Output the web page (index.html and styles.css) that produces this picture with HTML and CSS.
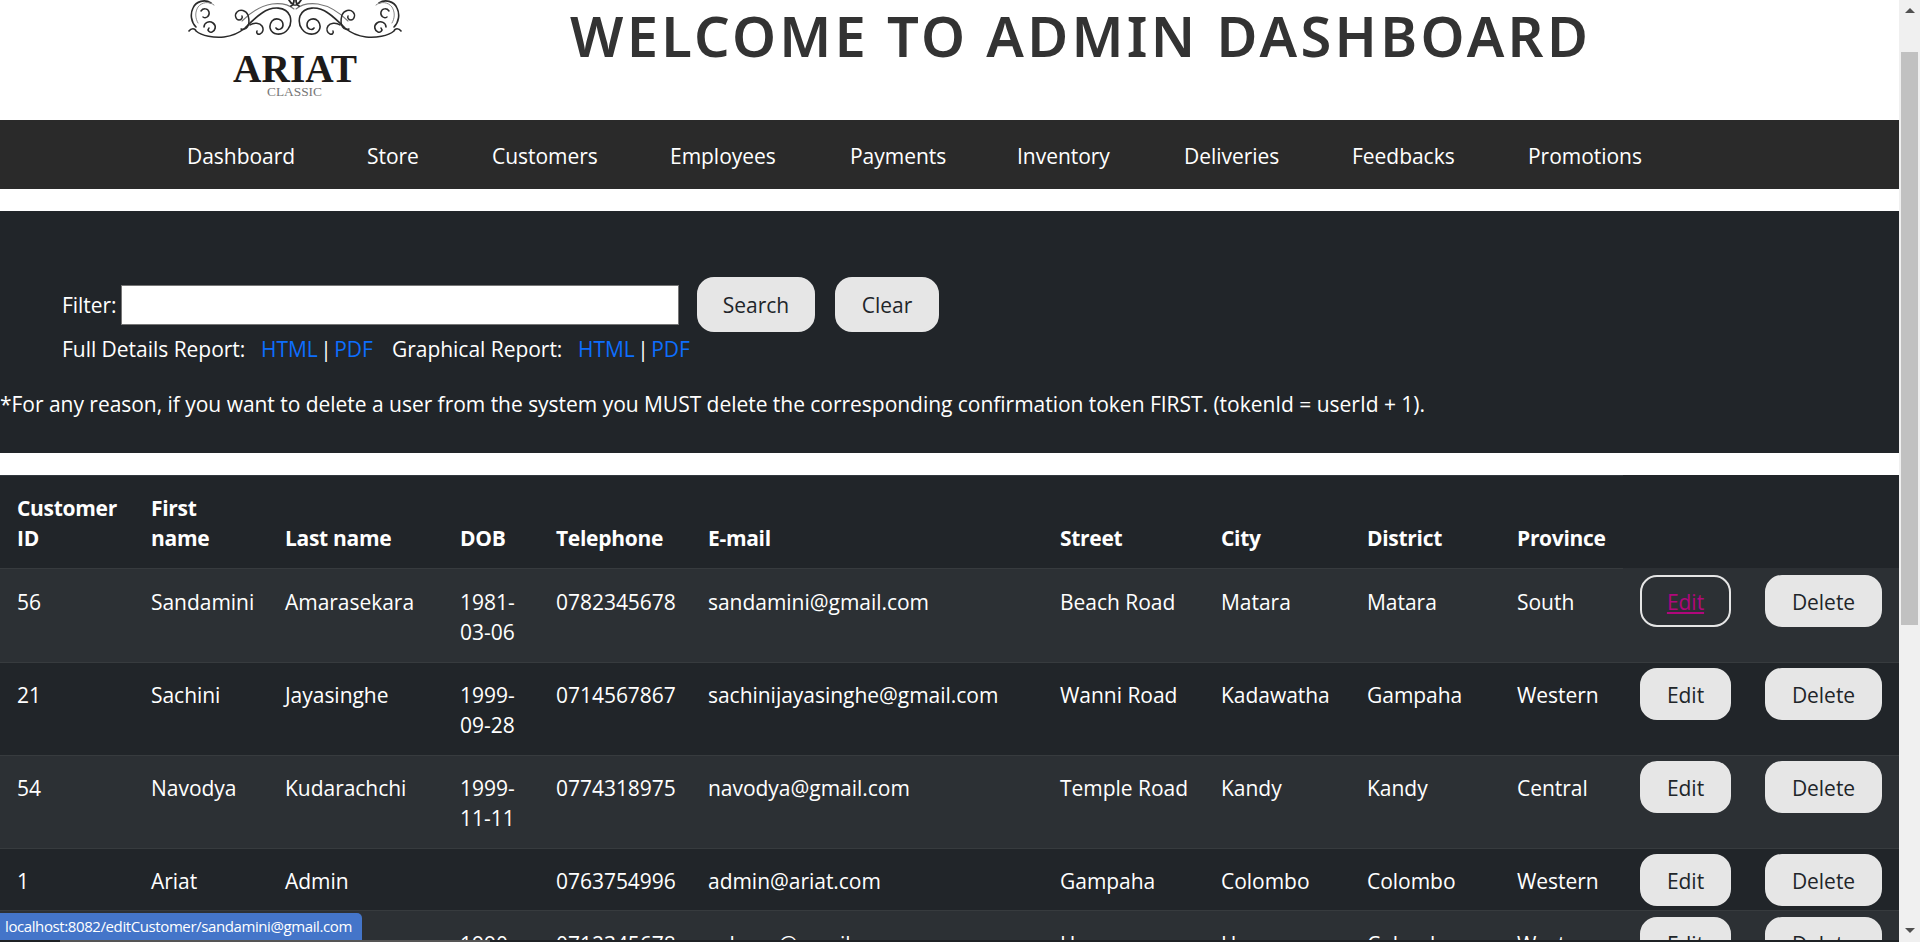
FILE: index.html
```html
<!DOCTYPE html>
<html lang="en">
<head>
<meta charset="utf-8">
<title>Admin Dashboard</title>
<link rel="stylesheet" href="styles.css">
</head>
<body>
<div class="window">
  <main class="viewport">
    <div class="scroll-area">
      <header class="top">
        <svg class="logo" viewBox="187 0 215 100" width="215" height="100" role="img" aria-label="Ariat Classic">
          <defs>
            <g id="flourish" fill="none" stroke="#2a2a2a" stroke-linecap="round">
              <path stroke-width="1.6" d="M189 31c2-3 6-3 7 0 6 5 18 7 28 6 9-1 15-4 21-9 6-6 11-11 17-15C272 6 286 6 290 16C293 26 286 35 277 34C270 33 268 26 272 21C276 17 283 19 283 25C283 29 278 31 276 28"/>
              <path stroke-width="1.1" stroke="#777" d="M242 21c8-8 18-15 30-17 8-1 16 0 22 5"/>
              <path stroke-width="1.6" d="M211 3c-6-4-15-2-18 5-3 6-2 14 3 19"/>
              <path stroke-width="1" stroke="#888" d="M214 5c-5-4-12-3-16 2-3 5-3 11 0 16"/>
              <path stroke-width="1.5" d="M201 11c2-3 7-3 8 1 1 4-3 7-6 5"/>
              <path stroke-width="1.6" d="M204 27c0-4 5-7 9-4 4 3 2 8-1 9-3 1-5-2-3-4"/>
              <path stroke-width="1.5" d="M241 29c5 2 10-3 7-14-2-5-8-6-11-3-3 3-1 8 2 8 2 0 4-2 3-4"/>
              <path stroke-width="1.5" d="M250 25c4-3 10-2 12 1 2 3 1 7-2 8-2 1-4-1-3-3"/>
              <path stroke-width="1.8" d="M294 0c0 3-1 5-3 6M289 0c1 2 3 4 5 5"/>
            </g>
          </defs>
          <use href="#flourish"/>
          <use href="#flourish" transform="matrix(-1 0 0 1 590 0)"/>
          <text class="logo-name" x="233" y="81.5" textLength="124" lengthAdjust="spacingAndGlyphs">ARIAT</text>
          <text class="logo-sub" x="267" y="96" textLength="55" lengthAdjust="spacingAndGlyphs">CLASSIC</text>
        </svg>
        <h1 class="title">WELCOME TO ADMIN DASHBOARD</h1>
      </header>

      <nav class="nav">
        <a href="#">Dashboard</a>
        <a href="#">Store</a>
        <a href="#">Customers</a>
        <a href="#">Employees</a>
        <a href="#">Payments</a>
        <a href="#">Inventory</a>
        <a href="#">Deliveries</a>
        <a href="#">Feedbacks</a>
        <a href="#">Promotions</a>
      </nav>

      <section class="panel">
        <form class="filter">
          <label class="filter-label" for="keyword">Filter:</label>
          <input class="filter-input" id="keyword" type="text">
          <button class="btn btn-search" type="button">Search</button>
          <button class="btn btn-clear" type="button">Clear</button>
        </form>
        <div class="reports">
          <span class="report-name">Full Details Report:</span>
          <span class="report-links"><a href="#">HTML</a> | <a href="#">PDF</a></span>
          <span class="report-name">Graphical Report:</span>
          <span class="report-links"><a href="#">HTML</a> | <a href="#">PDF</a></span>
        </div>
        <p class="note">*For any reason, if you want to delete a user from the system you MUST delete the corresponding confirmation token FIRST. (tokenId = userId + 1).</p>
      </section>

      <table class="customers">
        <colgroup>
          <col class="c-id"><col class="c-first"><col class="c-last"><col class="c-dob"><col class="c-tel"><col class="c-mail"><col class="c-street"><col class="c-city"><col class="c-district"><col class="c-province"><col class="c-edit"><col class="c-delete">
        </colgroup>
        <thead>
          <tr>
            <th>Customer<br>ID</th><th>First<br>name</th><th>Last name</th><th>DOB</th><th>Telephone</th><th>E-mail</th><th>Street</th><th>City</th><th>District</th><th>Province</th><th class="blank"></th><th class="blank"></th>
          </tr>
        </thead>
        <tbody>
          <tr>
            <td>56</td><td>Sandamini</td><td>Amarasekara</td><td>1981-03-06</td><td>0782345678</td><td>sandamini@gmail.com</td><td>Beach Road</td><td>Matara</td><td>Matara</td><td>South</td>
            <td class="action"><a class="btn btn-hover" href="#">Edit</a></td><td class="action"><a class="btn" href="#">Delete</a></td>
          </tr>
          <tr>
            <td>21</td><td>Sachini</td><td>Jayasinghe</td><td>1999-09-28</td><td>0714567867</td><td>sachinijayasinghe@gmail.com</td><td>Wanni Road</td><td>Kadawatha</td><td>Gampaha</td><td>Western</td>
            <td class="action"><a class="btn" href="#">Edit</a></td><td class="action"><a class="btn" href="#">Delete</a></td>
          </tr>
          <tr>
            <td>54</td><td>Navodya</td><td>Kudarachchi</td><td>1999-11-11</td><td>0774318975</td><td>navodya@gmail.com</td><td>Temple Road</td><td>Kandy</td><td>Kandy</td><td>Central</td>
            <td class="action"><a class="btn" href="#">Edit</a></td><td class="action"><a class="btn" href="#">Delete</a></td>
          </tr>
          <tr>
            <td>1</td><td>Ariat</td><td>Admin</td><td></td><td>0763754996</td><td>admin@ariat.com</td><td>Gampaha</td><td>Colombo</td><td>Colombo</td><td>Western</td>
            <td class="action"><a class="btn" href="#">Edit</a></td><td class="action"><a class="btn" href="#">Delete</a></td>
          </tr>
          <tr>
            <td></td><td></td><td></td><td>1990-01-01</td><td>0712345678</td><td>ashane@gmail.com</td><td>Horana</td><td>Horana</td><td>Colombo</td><td>Western</td>
            <td class="action"><a class="btn" href="#">Edit</a></td><td class="action"><a class="btn" href="#">Delete</a></td>
          </tr>
        </tbody>
      </table>
    </div>
    <div class="window-edge"><span class="window-edge-mark"></span></div>
  </main>

  <aside class="scrollbar" aria-hidden="true">
    <span class="arrow arrow-up"></span>
    <span class="thumb"></span>
    <span class="arrow arrow-down"></span>
  </aside>

  <div class="status">localhost:8082/editCustomer/sandamini@gmail.com</div>
</div>
</body>
</html>
```

FILE: styles.css
```css
* { box-sizing: border-box; }

html, body {
  margin: 0;
  height: 100%;
  overflow: hidden;
}

body {
  font-family: "Open Sans", "Noto Sans", "Liberation Sans", sans-serif;
  font-size: 21px;
  line-height: 30px;
  letter-spacing: -0.03px;
  color: #fff;
  background: #fff;
}

a { text-decoration: none; }

.window {
  position: relative;
  display: flex;
  height: 100vh;
}

.viewport {
  flex: 1;
  min-width: 0;
  display: flex;
  flex-direction: column;
}

.scroll-area {
  flex: 1;
  min-height: 0;
  overflow: hidden;
}

/* header */
.top {
  display: flex;
  height: 120px;
  padding-left: 187px;
  overflow: hidden;
  background: #fff;
}

.logo { flex: none; }

.logo-name {
  font-family: "Liberation Serif", serif;
  font-size: 40px;
  font-weight: 700;
  letter-spacing: 0;
  fill: #1d1a19;
}

.logo-sub {
  font-family: "Liberation Serif", serif;
  font-size: 12px;
  letter-spacing: 0;
  fill: #777;
}

.title {
  margin: 0 0 0 168px;
  font-family: "Noto Sans", sans-serif;
  font-size: 56px;
  line-height: 70px;
  font-weight: 600;
  letter-spacing: 3.3px;
  color: #333;
  white-space: nowrap;
}

/* nav */
.nav {
  display: grid;
  grid-template-columns: 180px 125px 178px 180px 167px 167px 168px 176px auto;
  align-items: center;
  height: 69px;
  padding: 2px 0 0 187px;
  background: #2a2a2a;
}

.nav a { color: #fff; }

/* filter panel */
.panel {
  margin-top: 22px;
  padding: 66px 0 34px;
  background: #212529;
}

.filter {
  display: flex;
  align-items: center;
  height: 55px;
  padding-left: 62px;
}

.filter-label { width: 59px; }

.filter-input {
  width: 558px;
  height: 40px;
  border: 1px solid #767676;
  background: #fff;
}

.btn {
  display: flex;
  align-items: center;
  justify-content: center;
  height: 52px;
  padding: 0;
  border: 2px solid #e6e6e6;
  border-radius: 17px;
  background: #e6e6e6;
  color: #212529;
  font: inherit;
  letter-spacing: inherit;
}

.btn-search,
.btn-clear { height: 55px; }

.btn-search { width: 118px; margin-left: 18px; }
.btn-clear { width: 104px; margin-left: 20px; }

.btn-hover {
  background: transparent;
  color: #b0077c;
  text-decoration: underline;
}

.action .btn { padding-top: 2px; }

.reports {
  display: grid;
  grid-template-columns: 199px 131px 186px auto;
  margin-top: 2px;
  padding-left: 62px;
}

.report-links { word-spacing: -3px; }
.report-links a { color: #0d6efd; }

.note {
  margin: 25px 0 0;
  white-space: nowrap;
}

/* table */
.customers {
  width: 1899px;
  margin-top: 22px;
  table-layout: fixed;
  border-collapse: separate;
  border-spacing: 0;
  background: #212529;
}

.c-id { width: 134px; }
.c-first { width: 134px; }
.c-last { width: 175px; }
.c-dob { width: 96px; }
.c-tel { width: 152px; }
.c-mail { width: 352px; }
.c-street { width: 161px; }
.c-city { width: 146px; }
.c-district { width: 150px; }
.c-province { width: 123px; }
.c-edit { width: 125px; }
.c-delete { width: 151px; }

.customers th,
.customers td {
  padding: 17px 8px 15px 17px;
  text-align: left;
  vertical-align: top;
  border-bottom: 1px solid #373b3e;
}

.customers th {
  vertical-align: bottom;
  font-weight: 700;
  border-top: 1px solid #32383e;
  letter-spacing: -0.3px;
}

.customers th.blank {
  border-top-color: transparent;
  border-bottom-color: #2c3034;
}

.customers tbody tr:nth-child(odd) { background: #2c3034; }

.customers tbody tr:first-child td,
.customers tbody tr:last-child td { padding-top: 18px; }

.customers tbody tr:nth-child(4) td:not(.action) { padding-bottom: 14px; }

.customers tbody td.action {
  padding: 5px 17px 0;
}

.customers tbody tr:first-child td.action,
.customers tbody tr:last-child td.action { padding-top: 6px; }

/* simulated page scrollbar */
.scrollbar {
  flex: none;
  width: 21px;
  display: flex;
  flex-direction: column;
  align-items: center;
  background: #f0f0f0;
}

.arrow {
  flex: none;
  width: 0;
  height: 0;
  border-left: 5px solid transparent;
  border-right: 5px solid transparent;
}

.arrow-up {
  margin-top: 8px;
  border-bottom: 5px solid #505050;
}

.thumb {
  flex: none;
  width: 17px;
  height: 573px;
  margin-top: 39px;
  background: #c1c1c1;
}

.arrow-down {
  margin-top: auto;
  margin-bottom: 9px;
  border-top: 5px solid #505050;
}

.window-edge {
  flex: none;
  height: 2px;
  background: #1f2225;
}

.window-edge-mark {
  display: block;
  width: 430px;
  height: 2px;
  margin-left: 60px;
  background: #555;
}

/* link status bubble, over the page */
.status {
  position: absolute;
  left: 0;
  bottom: 2px;
  width: 362px;
  height: 27px;
  padding-left: 5px;
  border-top-right-radius: 5px;
  background: #4475c9;
  font-size: 15px;
  line-height: 27px;
  letter-spacing: -0.4px;
  white-space: nowrap;
}
```
